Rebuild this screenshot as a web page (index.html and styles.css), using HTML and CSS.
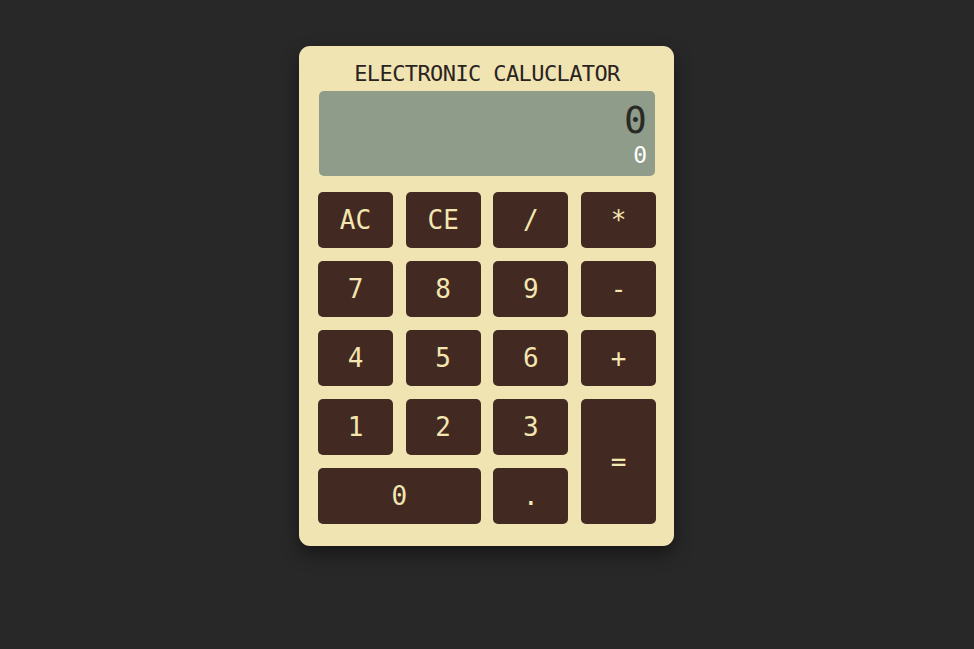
FILE: index.html
```html
<!DOCTYPE html>
<html lang="en">
<head>
<meta charset="utf-8">
<title>Electronic Calculator</title>
<link rel="stylesheet" href="styles.css">
</head>
<body>
<div class="calculator">
  <h1 class="title">ELECTRONIC CALUCLATOR</h1>
  <div class="display">
    <div class="display-main">0</div>
    <div class="display-sub">0</div>
  </div>
  <div class="keys">
    <button class="key">AC</button>
    <button class="key">CE</button>
    <button class="key">/</button>
    <button class="key">*</button>
    <button class="key">7</button>
    <button class="key">8</button>
    <button class="key">9</button>
    <button class="key">-</button>
    <button class="key">4</button>
    <button class="key">5</button>
    <button class="key">6</button>
    <button class="key">+</button>
    <button class="key">1</button>
    <button class="key">2</button>
    <button class="key">3</button>
    <button class="key key-equals">=</button>
    <button class="key key-zero">0</button>
    <button class="key">.</button>
  </div>
</div>
</body>
</html>
```

FILE: styles.css
```css
* { box-sizing: border-box; }

html, body {
  margin: 0;
  padding: 0;
}

body {
  background: #282828;
  min-height: 100vh;
  padding: 46px 1px 0 0;
  font-family: "DejaVu Sans Mono", "Liberation Mono", monospace;
}

.calculator {
  width: 375px;
  height: 500px;
  margin: 0 auto;
  background: #f1e4b3;
  border-radius: 11px;
  padding: 0 18px 22px 19px;
  box-shadow: 0 8px 18px rgba(0, 0, 0, 0.45);
  display: flex;
  flex-direction: column;
}

.title {
  margin: 0 0 4px;
  padding-top: 15px;
  font-size: 22px;
  line-height: 26px;
  font-weight: normal;
  text-align: center;
  color: #2a231e;
  letter-spacing: -0.6px;
}

.display {
  height: 85px;
  margin: 0 1px;
  background: #8e9c89;
  border-radius: 5px;
  padding: 10px 8px 0 8px;
  display: flex;
  flex-direction: column;
  align-items: flex-end;
  gap: 5px;
}

.display-main {
  font-size: 38px;
  line-height: 1;
  color: #2a2a25;
}

.display-sub {
  font-size: 23px;
  line-height: 1;
  color: #ffffff;
}

.keys {
  margin-top: 16px;
  display: grid;
  grid-template-columns: repeat(4, 1fr);
  grid-auto-rows: 56px;
  column-gap: 12.67px;
  row-gap: 13px;
}

.key {
  border: none;
  border-radius: 5px;
  background: #422a22;
  color: #f4e6b0;
  font-family: "DejaVu Sans Mono", "Liberation Mono", monospace;
  font-size: 26px;
  padding: 0;
  display: flex;
  align-items: center;
  justify-content: center;
  cursor: pointer;
}

.key-equals {
  grid-column: 4;
  grid-row: 4 / span 2;
}

.key-zero {
  grid-column: 1 / span 2;
}
```
